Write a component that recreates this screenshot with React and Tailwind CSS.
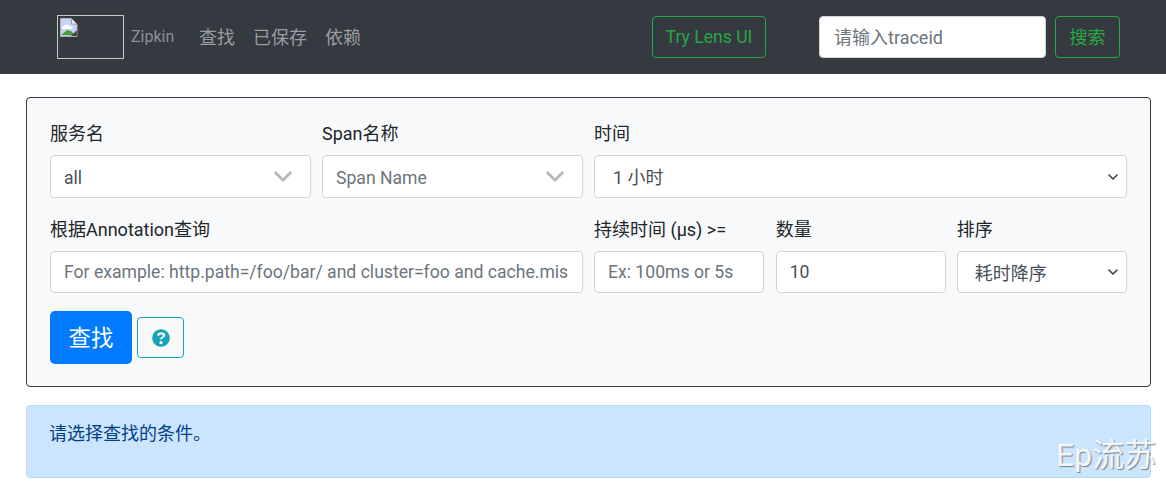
import React from "react";

const FONT = "font-['Roboto','Noto_Sans_CJK_SC',sans-serif]";
const inputCls =
  "h-[42px] w-full rounded-[4px] border border-[#ced4da] bg-white px-[13px] text-[17.6px] text-[#495057] placeholder:text-[#6c757d] outline-none";

const Label = ({ children }) => (
  <label className="mb-[9px] block h-[26px] pt-[1px] text-[18px] leading-[26px] text-[#212529]">{children}</label>
);

const Chevron = ({ className }) => (
  <svg viewBox="0 0 20 12" className={className} fill="none" stroke="currentColor" strokeWidth="3.2" strokeLinecap="round" strokeLinejoin="round">
    <path d="M2 2l8 8 8-8" />
  </svg>
);

const ComboBox = ({ value, placeholder }) => (
  <div className="flex h-[43px] items-center justify-between rounded-[4px] border border-[#ced4da] bg-white pl-[13px] pr-[18px] text-[17.6px]">
    <span className={placeholder ? "pt-[4px] text-[#6c757d]" : "pt-[4px] text-[#495057]"}>{value}</span>
    <Chevron className="h-[11px] w-[18px] text-[#b3b9bf]" />
  </div>
);

const NativeSelect = ({ value, height, pad }) => (
  <div className={`flex ${height} items-center justify-between rounded-[4px] border border-[#ced4da] bg-white ${pad} pr-[8px] text-[18px] text-[#495057]`}>
    <span className="pt-[2px]">{value}</span>
    <Chevron className="h-[6px] w-[10px] text-[#3c4043]" />
  </div>
);

const BrokenImage = () => (
  <svg viewBox="0 0 18 19" className="absolute left-[2px] top-[2px] h-[19px] w-[18px]">
    <path d="M0.5 0.5h11l5.5 5.5v12.5h-16.5z" fill="#c3d4f5" stroke="#b0b0b0" />
    <path d="M11.5 0.5v5.5h5.5z" fill="#eeeeee" stroke="#9a9a9a" />
    <path d="M2 9q4-4 8-1 2 1 3 0l-1 3h-10z" fill="#ffffff" />
    <path d="M1 17l6-5 4 1 5 4.500z" fill="#4f9a3a" />
    <path d="M11 18l6-6v6z" fill="#4a4a4a" />
  </svg>
);

const App = () => {
  return (
    <div className={`relative h-[484px] w-[1166px] overflow-hidden bg-white ${FONT}`}>
      <nav className="flex h-[74px] items-center bg-[#343a40] pl-[57px] pr-[46px]">
        <div className="relative h-[44px] w-[67px] border border-[#c8c8c8]">
          <BrokenImage />
        </div>
        <span className="ml-[7px] w-[42px] text-[16px] text-[#8a9097]">Zipkin</span>
        <div className="ml-[26px] flex gap-[18px] text-[18px] text-[#9a9da1]">
          <a>查找</a>
          <a>已保存</a>
          <a>依赖</a>
        </div>
        <button className="ml-auto h-[42px] w-[114px] rounded-[4px] border border-[#28a745] text-[17.6px] text-[#28a745]">
          Try Lens UI
        </button>
        <input
          className="ml-[53px] h-[42px] w-[227px] rounded-[4px] border border-[#ced4da] bg-white px-[14px] text-[18px] text-[#495057] placeholder:text-[#6c757d] outline-none"
          placeholder="请输入traceid"
        />
        <button className="ml-[9px] h-[42px] w-[65px] rounded-[4px] border border-[#28a745] text-[18px] text-[#28a745]">
          搜索
        </button>
      </nav>

      <main className="pl-[26px] pr-[15px] pt-[23px]">
        <section className="h-[290px] rounded-[4px] border border-[#343a40] bg-[#f8f9fa] px-[23px] pt-[22px]">
          <div className="grid grid-cols-12 gap-x-[11px]">
            <div className="col-span-3">
              <Label>服务名</Label>
              <ComboBox value="all" />
            </div>
            <div className="col-span-3">
              <Label>Span名称</Label>
              <ComboBox value="Span Name" placeholder />
            </div>
            <div className="col-span-6">
              <Label>时间</Label>
              <NativeSelect value="1 小时" height="h-[43px]" pad="pl-[18px]" />
            </div>
          </div>
          <div className="mt-[18px] grid grid-cols-12 gap-x-[11px]">
            <div className="col-span-6">
              <Label>根据Annotation查询</Label>
              <input className={inputCls} placeholder="For example: http.path=/foo/bar/ and cluster=foo and cache.miss" />
            </div>
            <div className="col-span-2">
              <Label>持续时间 (μs) &gt;=</Label>
              <input className={inputCls} placeholder="Ex: 100ms or 5s" />
            </div>
            <div className="col-span-2 pl-[0.4px]">
              <Label>数量</Label>
              <input className={inputCls} defaultValue="10" />
            </div>
            <div className="col-span-2">
              <Label>排序</Label>
              <NativeSelect value="耗时降序" height="h-[42px]" pad="pl-[17px]" />
            </div>
          </div>
          <div className="mt-[18px] flex items-center gap-[5px]">
            <button className="h-[53px] w-[82px] rounded-[5px] bg-[#007bff] pt-[2px] text-[22.4px] text-white">查找</button>
            <button className="flex h-[41px] w-[47px] items-center justify-center rounded-[4px] border border-[#17a2b8]">
              <svg viewBox="0 0 512 512" className="h-[18px] w-[18px]" fill="#17a2b8">
                <path d="M504 256c0 137-111 248-248 248S8 393 8 256C8 119 119 8 256 8s248 111 248 248zM262.700 90c-54.500 0-89.300 23-116.500 63.800-3.500 5.300-2.400 12.400 2.700 16.300l34.700 26.300c5.200 3.900 12.600 3 16.700-2.100 17.900-22.700 30.100-35.800 57.300-35.800 20.400 0 45.700 13.100 45.700 33 0 15-12.400 22.700-32.600 34-23.600 13.200-54.800 29.700-54.800 70.900V280c0 6.600 5.400 12 12 12h56c6.600 0 12-5.400 12-12v-1.300c0-28.600 83.500-29.800 83.500-107.100C379.500 113.400 319 90 262.700 90zM256 339.200c-25.500 0-46.200 20.700-46.200 46.200 0 25.500 20.700 46.200 46.200 46.200s46.200-20.700 46.200-46.200c0-25.500-20.700-46.200-46.200-46.200z" />
              </svg>
            </button>
          </div>
        </section>

        <div className="mt-[18px] h-[73px] rounded-[4px] border border-[#b8daff] bg-[#cce5ff] px-[22px] pt-[15px] text-[18px] leading-[26px] text-[#004085]">
          请选择查找的条件。
        </div>
      </main>

      <span className="absolute left-[1056px] top-[433px] text-[32px] leading-[44px] whitespace-nowrap text-white/90 [text-shadow:1px_1px_1px_rgba(0,0,0,0.45)]">
        Ep流苏
      </span>
    </div>
  );
};

export default App;
